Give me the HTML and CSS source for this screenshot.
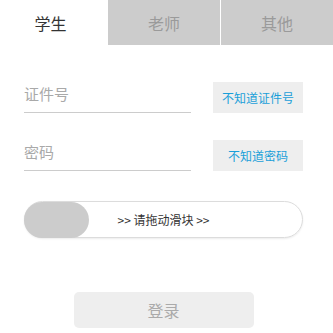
FILE: index.html
```html
<!DOCTYPE html>
<html lang="zh">
<head>
<meta charset="utf-8">
<title>登录</title>
<link rel="stylesheet" href="styles.css">
</head>
<body>
<div class="tabs">
  <div class="tab tab-active">学生</div>
  <div class="tab">老师</div>
  <div class="tab tab-last">其他</div>
</div>
<div class="form">
  <div class="row">
    <div class="field">证件号</div>
    <div class="help">不知道证件号</div>
  </div>
  <div class="row row-second">
    <div class="field">密码</div>
    <div class="help">不知道密码</div>
  </div>
  <div class="slider">
    <div class="knob"></div>
    <div class="slider-text">&gt;&gt; 请拖动滑块 &gt;&gt;</div>
  </div>
  <div class="submit-wrap">
    <div class="submit">登录</div>
  </div>
</div>
</body>
</html>
```
FILE: styles.css
```css
html, body {
  margin: 0;
  padding: 0;
  background: #fff;
  font-family: "Noto Sans CJK SC", "Noto Sans", sans-serif;
}
.tabs {
  display: grid;
  grid-template-columns: 108px 112px 113px;
  height: 45px;
}
.tab {
  display: flex;
  align-items: center;
  justify-content: center;
  background: #cccccc;
  color: #9a9a9a;
  font-size: 16px;
}
.tab-active {
  background: #fff;
  color: #333;
  padding-right: 7px;
}
.tab-last {
  border-left: 1px solid #fff;
}
.form {
  padding: 37px 30px 0 24px;
}
.row {
  display: flex;
  justify-content: space-between;
  align-items: flex-start;
}
.row-second {
  margin-top: 27px;
}
.field {
  width: 167px;
  height: 22px;
  padding-top: 1px;
  padding-bottom: 7px;
  font-size: 15px;
  line-height: 22px;
  color: #a9a9a9;
  border-bottom: 1px solid #cccccc;
}
.help {
  width: 90px;
  height: 31px;
  line-height: 31px;
  text-align: center;
  background: #eeeeee;
  color: #1a9fd9;
  font-size: 12px;
}
.slider {
  position: relative;
  margin-top: 30px;
  height: 37px;
  box-sizing: border-box;
  border: 1px solid #dcdcdc;
  border-radius: 19px;
  box-shadow: 0 1px 2px rgba(0, 0, 0, 0.08);
  display: flex;
  align-items: center;
  justify-content: center;
}
.knob {
  position: absolute;
  left: -1px;
  top: 0;
  width: 65px;
  height: 36px;
  border-radius: 18px;
  background: #cccccc;
}
.slider-text {
  position: relative;
  font-size: 12px;
  line-height: 16px;
  color: #333;
}
.submit-wrap {
  display: flex;
  justify-content: center;
  margin-top: 54px;
}
.submit {
  width: 180px;
  height: 36px;
  line-height: 36px;
  text-align: center;
  background: #eeeeee;
  border-radius: 5px;
  color: #aaaaaa;
  font-size: 16px;
}
```
